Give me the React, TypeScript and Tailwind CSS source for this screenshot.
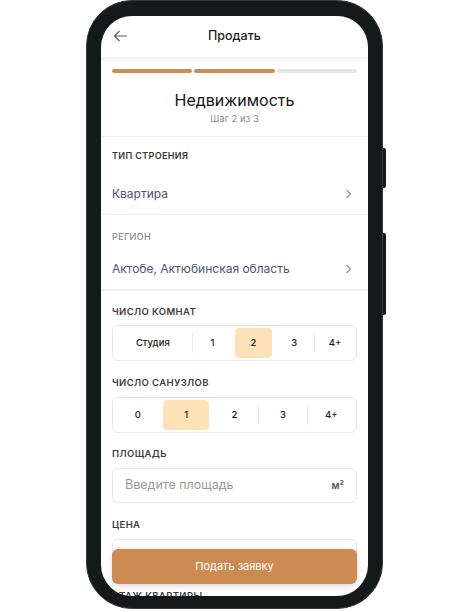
import React from "react";

function Chevron() {
    return (
        <svg width="7" height="10" viewBox="0 0 7 10" fill="none" className="mr-[5px]">
            <path d="M1.5 1 L5.5 5 L1.5 9" stroke="#8a8d93" strokeWidth="1.1" />
        </svg>
    );
}

function Segmented({ items, selected, wide }: { items: string[]; selected: number; wide?: boolean }) {
    return (
        <div className="flex h-[36px] border border-[#e7e7e7] rounded-[6px] px-[1px] py-[2px]">
            {items.map((item, i) => (
                <React.Fragment key={item}>
                    {i > 0 && (
                        <div
                            className={
                                i - 1 === selected || i === selected
                                    ? "w-px h-[20px] self-center bg-transparent"
                                    : "w-px h-[20px] self-center bg-[#eaeaea]"
                            }
                        />
                    )}
                    <div className={wide && i === 0 ? "flex-[2] flex px-[1px]" : "flex-1 flex px-[1px]"}>
                        <div
                            className={
                                i === selected
                                    ? "w-full rounded-[4px] bg-[#fee3b8] flex items-center justify-center text-[9.5px] font-medium text-[#222]"
                                    : "w-full flex items-center justify-center text-[9.5px] font-medium text-[#222]"
                            }
                        >
                            {item}
                        </div>
                    </div>
                </React.Fragment>
            ))}
        </div>
    );
}

function Label({ children }: { children: React.ReactNode }) {
    return (
        <div className="text-[9.5px] leading-[12px] font-semibold tracking-[0.04em] text-[#3d3d3d] uppercase">
            {children}
        </div>
    );
}

export default function App() {
    return (
        <div className="w-[470px] h-[612px] bg-white font-['Inter',sans-serif] pl-[86px]">
            {/* Phone */}
            <div className="relative w-[297px] h-[609px] rounded-[46px] bg-[#151919] border border-[#323a3b] pt-[15px] px-[14px] pb-[12px]">
                <div className="absolute right-[-4px] top-[147px] w-[3px] h-[40px] rounded-r-[2px] bg-[#151919]" />
                <div className="absolute right-[-4px] top-[232px] w-[3px] h-[82px] rounded-r-[2px] bg-[#151919]" />

                {/* Screen */}
                <div className="relative h-full bg-white rounded-[31px] overflow-hidden">
                    {/* Header */}
                    <div className="relative h-[41px] flex items-center justify-center shadow-[0_2px_5px_rgba(0,0,0,0.07)]">
                        <div className="absolute left-[12px] top-[14px]">
                            <svg width="15" height="12" viewBox="0 0 15 12" fill="none">
                                <path d="M14 6 H1.5 M6.5 1 L1.5 6 L6.5 11" stroke="#4d5875" strokeWidth="1.2" />
                            </svg>
                        </div>
                        <span className="text-[12.5px] font-medium text-[#1f1f1f]">Продать</span>
                    </div>

                    {/* Progress */}
                    <div className="flex gap-[2px] px-[11px] mt-[12px]">
                        <div className="flex-1 h-[4px] rounded-full bg-[#d08b53]" />
                        <div className="flex-1 h-[4px] rounded-full bg-[#d08b53]" />
                        <div className="flex-1 h-[4px] rounded-full bg-[#e6e6e6]" />
                    </div>

                    <div className="mt-[17px] text-center text-[16px] leading-[20px] text-[#141414]">Недвижимость</div>
                    <div className="mt-[3px] text-center text-[9.5px] leading-[12px] text-[#8b8b8b]">Шаг 2 из 3</div>

                    <div className="mt-[11px] h-px bg-[#ececec]" />

                    {/* Building type */}
                    <div className="px-[11px] pt-[13px]">
                        <div className="text-[9px] leading-[12px] font-semibold tracking-[0.04em] text-[#383838]">ТИП СТРОЕНИЯ</div>
                        <div className="mt-[12px] h-[40px] flex items-center justify-between">
                            <span className="text-[12px] text-[#4b5570]">Квартира</span>
                            <Chevron />
                        </div>
                    </div>
                    <div className="h-px bg-[#ececec]" />

                    {/* Region */}
                    <div className="px-[11px] pt-[16px]">
                        <div className="text-[9px] leading-[12px] font-medium tracking-[0.04em] text-[#8a8a8a]">РЕГИОН</div>
                        <div className="mt-[6px] h-[40px] flex items-center justify-between">
                            <span className="text-[12px] text-[#4b5570]">Актобе, Актюбинская область</span>
                            <Chevron />
                        </div>
                    </div>
                    <div className="h-[2px] bg-[#f1f1f1]" />

                    <div className="px-[11px] pt-[15px]">
                        <Label>Число комнат</Label>
                        <div className="mt-[7px]">
                            <Segmented items={["Студия", "1", "2", "3", "4+"]} selected={2} wide />
                        </div>

                        <div className="mt-[16px]">
                            <Label>Число санузлов</Label>
                        </div>
                        <div className="mt-[8px]">
                            <Segmented items={["0", "1", "2", "3", "4+"]} selected={1} />
                        </div>

                        <div className="mt-[15px]">
                            <Label>Площадь</Label>
                        </div>
                        <div className="mt-[8px] h-[35px] border border-[#e7e7e7] rounded-[6px] flex items-center justify-between px-[12px]">
                            <span className="text-[12.5px] text-[#9a9a9a]">Введите площадь</span>
                            <span className="text-[10px] font-semibold text-[#4b5570]">м²</span>
                        </div>

                        <div className="mt-[16px]">
                            <Label>Цена</Label>
                        </div>
                        <div className="mt-[8px] h-[35px] border border-[#e7e7e7] rounded-[6px]" />

                        <div className="mt-[16px]">
                            <Label>Этаж квартиры</Label>
                        </div>
                    </div>

                    {/* Submit */}
                    <div className="absolute left-[11px] right-[11px] bottom-[12px] h-[35px] rounded-[6px] bg-[#cd8a52] shadow-[0_2px_6px_rgba(0,0,0,0.15)] flex items-center justify-center">
                        <span className="text-[11px] text-white">Подать заявку</span>
                    </div>
                </div>
            </div>
        </div>
    );
}
